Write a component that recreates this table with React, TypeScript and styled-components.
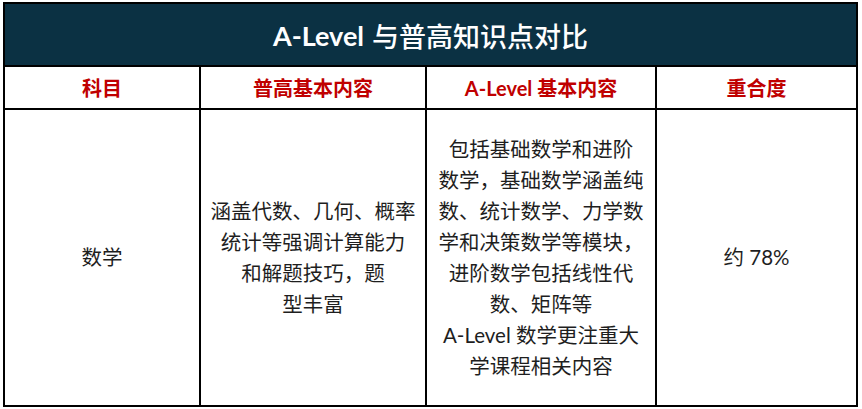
import React from "react";
import styled, { createGlobalStyle } from "styled-components";

const Global = createGlobalStyle`
  html, body { margin: 0; padding: 0; background: #ffffff; }
  body { font-family: "Lato", "Noto Sans CJK SC", sans-serif; }
`;

const Page = styled.div`
  padding: 2px 0 0 3px;
`;

const Table = styled.div`
  width: 855px;
  box-sizing: border-box;
  border: 2px solid #000;
  display: flex;
  flex-direction: column;
`;

const TitleBar = styled.div`
  height: 61px;
  background: #0b3143;
  color: #ffffff;
  display: flex;
  align-items: center;
  justify-content: center;
  font-size: 27px;
  padding-top: 1px;
  box-sizing: border-box;
`;

const TitleLatin = styled.span`
  font-weight: 700;
  margin-right: 8px;
`;

const TitleCjk = styled.span`
  font-weight: 500;
`;

const Row = styled.div<{ $h: number }>`
  display: grid;
  grid-template-columns: 196px 226px 230px 1fr;
  border-top: 2px solid #000;
  box-sizing: border-box;
  height: ${(p) => p.$h}px;
`;

const Cell = styled.div<{ $last?: boolean }>`
  box-sizing: border-box;
  border-right: ${(p) => (p.$last ? "none" : "2px solid #000")};
  display: flex;
  flex-direction: column;
  align-items: center;
  justify-content: center;
  text-align: center;
`;

const HeadText = styled.span`
  color: #c00000;
  font-size: 20px;
  font-weight: 700;
`;

const BodyText = styled.div`
  color: #1e1e1e;
  font-size: 20.5px;
  line-height: 31px;
  display: flex;
  flex-direction: column;
  align-items: center;
`;

const Line = styled.span`
  white-space: nowrap;
`;

const col2 = ["涵盖代数、几何、概率", "统计等强调计算能力", "和解题技巧，题", "型丰富"];
const col3 = [
  "包括基础数学和进阶",
  "数学，基础数学涵盖纯",
  "数、统计数学、力学数",
  "学和决策数学等模块，",
  "进阶数学包括线性代",
  "数、矩阵等",
  "A-Level 数学更注重大",
  "学课程相关内容",
];

export default function App() {
  return (
    <Page>
      <Global />
      <Table>
        <TitleBar>
          <TitleLatin>A-Level</TitleLatin>
          <TitleCjk>与普高知识点对比</TitleCjk>
        </TitleBar>
        <Row $h={43}>
          <Cell><HeadText>科目</HeadText></Cell>
          <Cell><HeadText>普高基本内容</HeadText></Cell>
          <Cell><HeadText>A-Level 基本内容</HeadText></Cell>
          <Cell $last><HeadText>重合度</HeadText></Cell>
        </Row>
        <Row $h={297}>
          <Cell><BodyText><Line>数学</Line></BodyText></Cell>
          <Cell>
            <BodyText>
              {col2.map((l) => (
                <Line key={l}>{l}</Line>
              ))}
            </BodyText>
          </Cell>
          <Cell>
            <BodyText>
              {col3.map((l) => (
                <Line key={l}>{l}</Line>
              ))}
            </BodyText>
          </Cell>
          <Cell $last><BodyText><Line>约 78%</Line></BodyText></Cell>
        </Row>
      </Table>
    </Page>
  );
}
